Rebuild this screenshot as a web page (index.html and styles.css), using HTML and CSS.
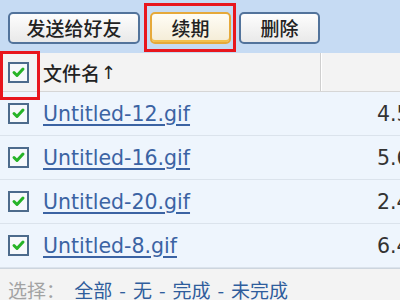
FILE: index.html
```html
<!DOCTYPE html>
<html>

<head>
    <title>文件列表</title>
    <link rel="stylesheet" href="styles.css">
</head>

<body>
    <div class="toolbar">
        <button class="btn btn-wide">发送给好友</button>
        <span class="mark-box">
            <button class="btn btn-focus">续期</button>
        </span>
        <button class="btn">删除</button>
    </div>

    <div class="list">
        <div class="list-head">
            <div class="cell-check">
                <span class="mark-check"></span>
                <svg class="check" width="21" height="21" viewBox="0 0 21 21">
                    <rect x="1" y="1" width="19" height="19" fill="#f7f9fb" stroke="#4d6b8c" stroke-width="2"/>
                    <path d="M6 10.5 L9 13.5 L15 7" fill="none" stroke="#27b427" stroke-width="3" stroke-linecap="round" stroke-linejoin="round"/>
                </svg>
            </div>
            <div class="cell-name head-name">文件名<span class="arrow">↑</span></div>
            <div class="cell-size"></div>
        </div>

        <div class="row">
            <div class="cell-check">
                <svg class="check" width="21" height="21" viewBox="0 0 21 21">
                    <rect x="1" y="1" width="19" height="19" fill="#f7f9fb" stroke="#4d6b8c" stroke-width="2"/>
                    <path d="M6 10.5 L9 13.5 L15 7" fill="none" stroke="#27b427" stroke-width="3" stroke-linecap="round" stroke-linejoin="round"/>
                </svg>
            </div>
            <div class="cell-name"><a href="#">Untitled-12.gif</a></div>
            <div class="cell-size">4.5 KB</div>
        </div>
        <div class="row">
            <div class="cell-check">
                <svg class="check" width="21" height="21" viewBox="0 0 21 21">
                    <rect x="1" y="1" width="19" height="19" fill="#f7f9fb" stroke="#4d6b8c" stroke-width="2"/>
                    <path d="M6 10.5 L9 13.5 L15 7" fill="none" stroke="#27b427" stroke-width="3" stroke-linecap="round" stroke-linejoin="round"/>
                </svg>
            </div>
            <div class="cell-name"><a href="#">Untitled-16.gif</a></div>
            <div class="cell-size">5.6 KB</div>
        </div>
        <div class="row">
            <div class="cell-check">
                <svg class="check" width="21" height="21" viewBox="0 0 21 21">
                    <rect x="1" y="1" width="19" height="19" fill="#f7f9fb" stroke="#4d6b8c" stroke-width="2"/>
                    <path d="M6 10.5 L9 13.5 L15 7" fill="none" stroke="#27b427" stroke-width="3" stroke-linecap="round" stroke-linejoin="round"/>
                </svg>
            </div>
            <div class="cell-name"><a href="#">Untitled-20.gif</a></div>
            <div class="cell-size">2.4 KB</div>
        </div>
        <div class="row">
            <div class="cell-check">
                <svg class="check" width="21" height="21" viewBox="0 0 21 21">
                    <rect x="1" y="1" width="19" height="19" fill="#f7f9fb" stroke="#4d6b8c" stroke-width="2"/>
                    <path d="M6 10.5 L9 13.5 L15 7" fill="none" stroke="#27b427" stroke-width="3" stroke-linecap="round" stroke-linejoin="round"/>
                </svg>
            </div>
            <div class="cell-name"><a href="#">Untitled-8.gif</a></div>
            <div class="cell-size">6.4 KB</div>
        </div>
    </div>

    <div class="footer">
        <span class="footer-label">选择：</span>
        <a href="#">全部</a><span class="sep">-</span><a href="#">无</a><span class="sep">-</span><a href="#">完成</a><span class="sep">-</span><a href="#">未完成</a>
    </div>
</body>

</html>
```

FILE: styles.css
```css
html,
body {
    margin: 0;
    padding: 0;
    overflow: hidden;
}

body {
    width: 460px;
    font-family: "DejaVu Sans", "Noto Sans CJK SC", sans-serif;
    color: #333;
    background-color: #eef5fd;
}

.toolbar {
    display: flex;
    align-items: flex-start;
    height: 53px;
    padding: 12px 0 0 8px;
    box-sizing: border-box;
    background-color: #c6dbf3;
}

.btn {
    height: 32px;
    width: 81px;
    padding: 0;
    border: 2px solid #52739b;
    border-radius: 5px;
    background: linear-gradient(#fdfdfd, #e9e9e9);
    font-family: "Noto Sans CJK SC", sans-serif;
    font-size: 19px;
    font-weight: 500;
    line-height: 28px;
    color: #222;
}

.btn-wide {
    width: 132px;
    margin-right: 4px;
}

.btn-focus {
    border-color: #e6a93a;
    background: linear-gradient(#fffdf6, #f4ecd6);
    box-shadow: inset 0 -2px 0 #f2c04e;
}

/* 빨간 표시 박스 */
.mark-box {
    margin-top: -9px;
    margin-right: 3px;
    padding: 6px 2px 5px 3px;
    border: 3px solid #e8161c;
}

.list-head {
    display: flex;
    height: 39px;
    background-color: #f3f3f3;
    border-bottom: 1px solid #d6d6d6;
    box-sizing: border-box;
}

.row {
    display: flex;
    height: 44px;
    border-bottom: 1px solid #dbe3ec;
    box-sizing: border-box;
}

.cell-check {
    position: relative;
    width: 43px;
    display: flex;
    align-items: center;
    padding-left: 8px;
    box-sizing: border-box;
}

.check {
    display: block;
}

.mark-check {
    position: absolute;
    left: 0;
    top: -2px;
    width: 34px;
    height: 43px;
    border: 3px solid #e8161c;
}

.cell-name {
    width: 277px;
    display: flex;
    align-items: center;
    font-size: 20.5px;
}

.head-name {
    font-family: "Noto Sans CJK SC", sans-serif;
    font-size: 19px;
    font-weight: 500;
    color: #222;
    border-right: 1px solid #cfcfcf;
    box-shadow: 1px 0 0 #fff;
}

.arrow {
    margin-left: 1px;
    font-family: "DejaVu Sans", sans-serif;
    font-size: 18px;
    font-weight: 400;
}

.cell-name a {
    color: #3b63a3;
    text-decoration: underline;
    text-underline-offset: 3px;
}

.cell-size {
    flex: 1;
    display: flex;
    align-items: center;
    padding-left: 57px;
    font-size: 20.5px;
    color: #333;
}

.footer {
    height: 30px;
    padding: 7px 0 0 8px;
    background-color: #f3f3f3;
    border-top: 1px solid #cdd5de;
    font-family: "Noto Sans CJK SC", sans-serif;
    font-size: 19px;
    color: #2f5d9c;
}

.footer-label {
    color: #a3a3a3;
    margin-right: 5px;
}

.footer a {
    color: #2f5d9c;
    text-decoration: none;
}

.sep {
    margin: 0 7px;
}
```
